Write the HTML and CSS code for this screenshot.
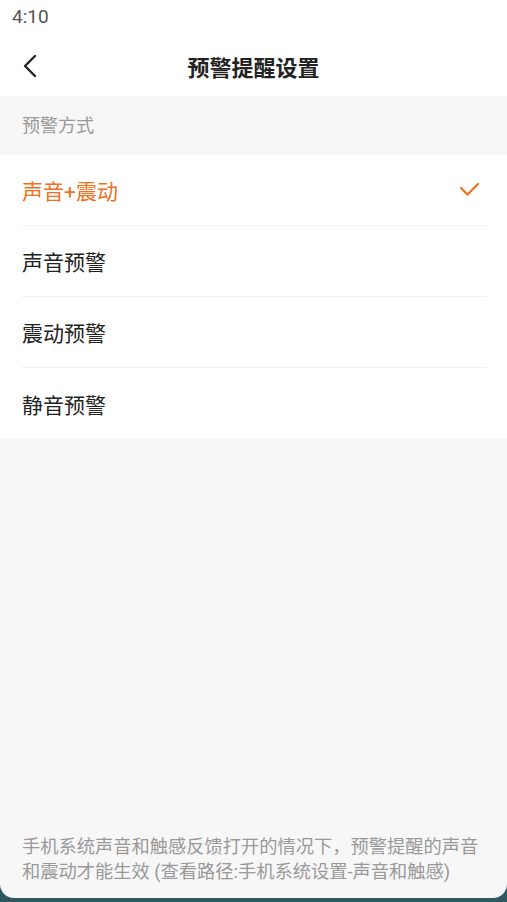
FILE: index.html
```html
<!DOCTYPE html>
<html lang="zh-CN">
<head>
    <meta charset="UTF-8">
    <meta name="viewport" content="width=device-width, initial-scale=1.0">
    <title>预警提醒设置</title>
    <link rel="stylesheet" href="styles.css">
</head>
<body>
    <div class="screen">
        <div class="status-bar">4:10</div>
        <div class="nav-bar">
            <svg class="back" width="20" height="26" viewBox="0 0 20 26">
                <path d="M13 3 L3 13 L13 23" fill="none" stroke="#222" stroke-width="2.4" stroke-linecap="round" stroke-linejoin="round"/>
            </svg>
            <h1 class="title">预警提醒设置</h1>
        </div>

        <div class="section-title">预警方式</div>
        <ul class="options">
            <li class="option active">
                <span>声音+震动</span>
                <svg class="check" width="22" height="16" viewBox="0 0 22 16">
                    <path d="M2 6 L8.5 12.5 L19 2" fill="none" stroke="#f26f1b" stroke-width="2.2" stroke-linecap="round" stroke-linejoin="round"/>
                </svg>
            </li>
            <li class="option"><span>声音预警</span></li>
            <li class="option"><span>震动预警</span></li>
            <li class="option"><span>静音预警</span></li>
        </ul>

        <p class="tip">手机系统声音和触感反馈打开的情况下，预警提醒的声音和震动才能生效 (查看路径:手机系统设置-声音和触感)</p>
    </div>
</body>
</html>
```

FILE: styles.css
```css
* {
    margin: 0;
    padding: 0;
    box-sizing: border-box;
}

body {
    font-family: Roboto, "Noto Sans CJK SC", sans-serif;
    background-color: #2d5862;
    width: 507px;
    height: 902px;
    overflow: hidden;
}

.screen {
    height: 898px;
    background-color: #f7f7f7;
    border-radius: 0 0 14px 14px;
    display: flex;
    flex-direction: column;
    overflow: hidden;
}

.status-bar {
    height: 36px;
    background-color: #fff;
    color: #555;
    font-size: 19px;
    padding: 5px 0 0 12px;
}

.nav-bar {
    height: 60px;
    background-color: #fff;
    display: flex;
    align-items: center;
    justify-content: center;
    position: relative;
}

.back {
    position: absolute;
    left: 22px;
    top: 17px;
}

.title {
    font-size: 22px;
    font-weight: bold;
    color: #222;
}

.section-title {
    height: 59px;
    line-height: 59px;
    padding-left: 22px;
    font-size: 18px;
    color: #999;
}

.options {
    list-style: none;
    background-color: #fff;
}

.option {
    height: 71px;
    margin: 0 20px 0 22px;
    display: flex;
    align-items: center;
    justify-content: space-between;
    font-size: 21px;
    color: #222;
    border-bottom: 1px solid #f1f1f1;
}

.option:last-child {
    border-bottom: none;
}

.option.active {
    color: #f26f1b;
}

.check {
    margin-right: 6px;
}

.tip {
    margin-top: auto;
    padding: 0 20px 14px 22px;
    font-size: 18.25px;
    line-height: 25px;
    color: #999;
}
```
